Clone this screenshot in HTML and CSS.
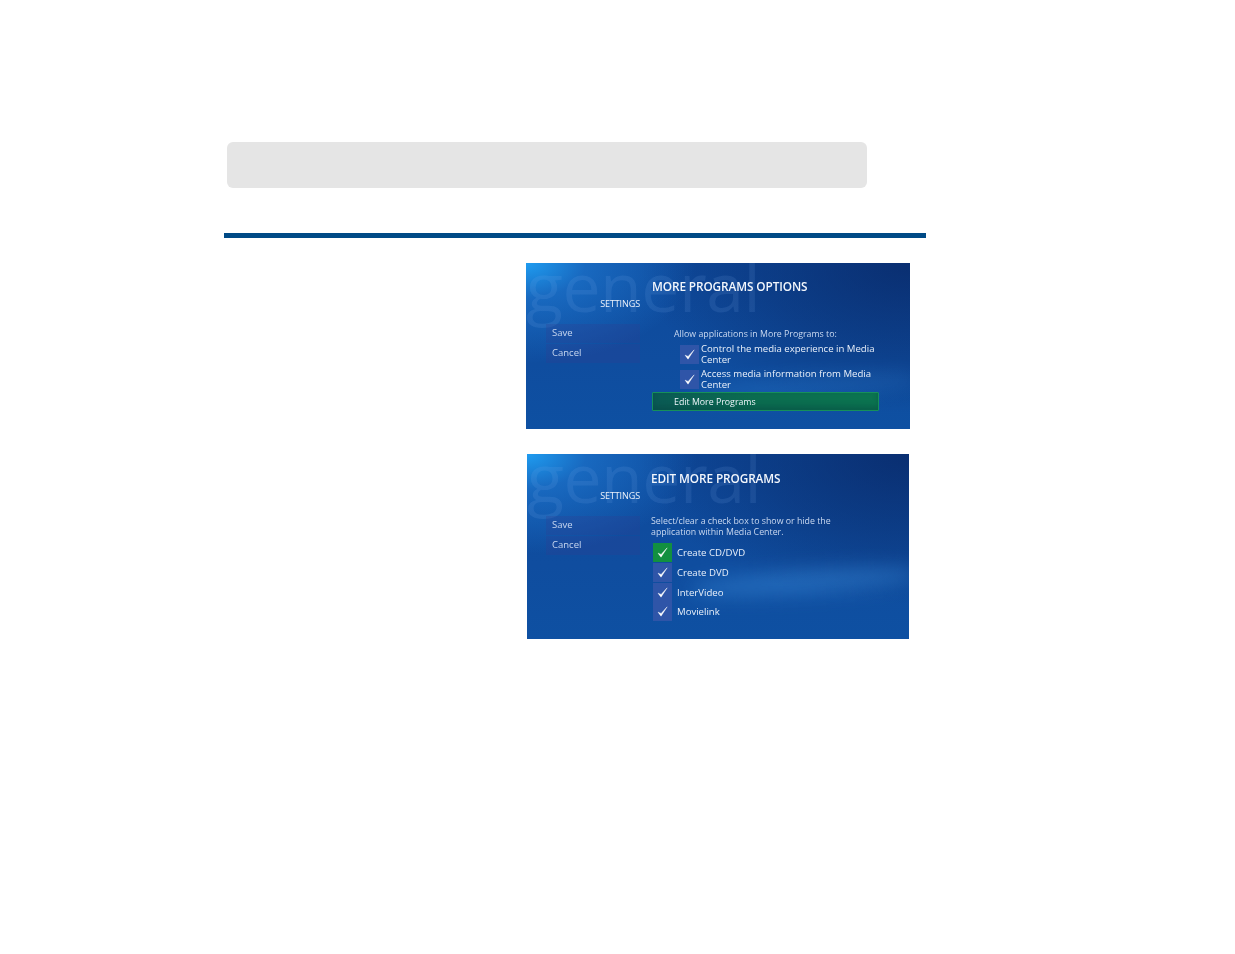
FILE: index.html
```html
<!DOCTYPE html>
<html lang="en">
<head>
<meta charset="utf-8">
<title>More Programs Options</title>
<link rel="stylesheet" href="styles.css">
</head>
<body>
<div class="page">
  <div class="notice"></div>
  <div class="rule"></div>
  <div class="shots">
    <section class="screen screen-a">
      <div class="watermark">general</div>
      <div class="streak"></div>
      <div class="side">
        <div class="settings">SETTINGS</div>
        <div class="menu-item">Save</div>
        <div class="menu-item">Cancel</div>
      </div>
      <div class="main">
        <div class="title">MORE PROGRAMS OPTIONS</div>
        <div class="allow">Allow applications in More Programs to:</div>
        <div class="opt">
          <span class="box"><svg viewBox="0 0 18 18"><path d="M4.8 9.6 7.6 13.4 13.4 4.6 7.7 10.8Z"/></svg></span>
          <span class="opt-text">Control the media experience in Media Center</span>
        </div>
        <div class="opt">
          <span class="box"><svg viewBox="0 0 18 18"><path d="M4.8 9.6 7.6 13.4 13.4 4.6 7.7 10.8Z"/></svg></span>
          <span class="opt-text">Access media information from Media Center</span>
        </div>
        <div class="edit">Edit More Programs</div>
      </div>
    </section>
    <section class="screen screen-b">
      <div class="watermark">general</div>
      <div class="streak"></div>
      <div class="side">
        <div class="settings">SETTINGS</div>
        <div class="menu-item">Save</div>
        <div class="menu-item">Cancel</div>
      </div>
      <div class="main">
        <div class="title">EDIT MORE PROGRAMS</div>
        <div class="desc">Select/clear a check box to show or hide the application within Media Center.</div>
        <div class="list">
          <div class="row"><span class="box box-on"><svg viewBox="0 0 18 18"><path d="M4.8 9.6 7.6 13.4 13.4 4.6 7.7 10.8Z"/></svg></span>Create CD/DVD</div>
          <div class="row"><span class="box"><svg viewBox="0 0 18 18"><path d="M4.8 9.6 7.6 13.4 13.4 4.6 7.7 10.8Z"/></svg></span>Create DVD</div>
          <div class="row"><span class="box"><svg viewBox="0 0 18 18"><path d="M4.8 9.6 7.6 13.4 13.4 4.6 7.7 10.8Z"/></svg></span>InterVideo</div>
          <div class="row"><span class="box"><svg viewBox="0 0 18 18"><path d="M4.8 9.6 7.6 13.4 13.4 4.6 7.7 10.8Z"/></svg></span>Movielink</div>
        </div>
      </div>
    </section>
  </div>
</div>
</body>
</html>
```
FILE: styles.css
```css
html, body { margin: 0; padding: 0; background: #fff; }
body { height: 954px; overflow: hidden; font-family: "Open Sans", "Noto Sans", sans-serif; }
.page { width: 702px; margin-left: 224px; padding-top: 142px; }
.notice { width: 640px; height: 46px; margin-left: 3px; background: #e5e5e5; border-radius: 6px; }
.rule { height: 5px; margin-top: 45px; background: #004a86; }
.shots { margin-left: 302px; margin-top: 25px; display: flex; flex-direction: column; gap: 25px; }

.screen {
  position: relative; overflow: hidden; display: flex; color: #e4ecf8;
  background:
    radial-gradient(ellipse 170px 100px at 0 0, #1f9cf0 0%, rgba(31,125,215,.6) 35%, rgba(20,90,180,0) 100%),
    radial-gradient(ellipse 270px 150px at 100% 0, rgba(8,35,95,.7) 0%, rgba(8,35,95,.35) 55%, rgba(8,35,95,0) 100%),
    linear-gradient(180deg, #0e4a9c 0%, #0f4d9f 60%, #0e50a2 100%);
}
.screen-a { width: 384px; height: 166px; }
.screen-b { width: 382px; height: 185px; margin-left: 1px; }
.watermark {
  position: absolute; left: 0; top: 0; font-size: 68px; line-height: 46px; letter-spacing: -.5px;
  color: rgba(130,180,240,.13); font-weight: 400; white-space: nowrap; filter: blur(.6px);
}
.streak {
  position: absolute; right: -10px; bottom: 45px; width: 230px; height: 24px; border-radius: 50%;
  background: rgba(70,160,235,.32); filter: blur(9px); transform: rotate(-4deg);
}
.screen-a .streak { opacity: .5; bottom: 30px; }
.side { position: relative; width: 94px; margin-left: 20px; flex: none; filter: blur(.25px); }
.screen-b .side { margin-left: 19px; }
.settings { font-size: 9px; line-height: 12px; text-align: right; letter-spacing: -.1px; color: #eef3fb; }
.screen-a .settings { padding-top: 35px; margin-bottom: 14px; }
.screen-b .settings { padding-top: 36px; margin-bottom: 14px; }
.menu-item {
  height: 19px; line-height: 18px; margin-bottom: 1px; padding-left: 6px; font-size: 9.5px;
  background: rgba(50,60,145,.25); color: #c9d8f0;
}
.main { position: relative; flex: 1; filter: blur(.25px); }
.title { font-size: 11.8px; line-height: 15px; font-weight: 600; color: #f2f6fc; white-space: nowrap; letter-spacing: -.1px; }
.screen-a .main { padding-left: 12px; padding-top: 16px; }
.screen-b .main { padding-left: 11px; padding-top: 17px; }
.allow { margin: 34px 0 2px 22px; font-size: 8.8px; line-height: 12px; color: #c9d8f0; }
.opt { display: flex; align-items: center; margin-left: 28px; height: 25px; }
.opt-text { width: 186px; margin-left: 2px; padding-bottom: 2px; font-size: 9.6px; line-height: 11px; color: #e9f0fa; }
.box { flex: none; display: flex; width: 19px; height: 19px; background: #2f55a8; }
.box svg { width: 100%; height: 100%; fill: #fff; stroke: #fff; stroke-width: .4; }
.box-on { background: #129040; }
.edit {
  box-sizing: border-box; width: 227px; height: 19px; padding-left: 21px; line-height: 18px; font-size: 8.8px;
  color: #eef4fa; border: 1px solid #16905a; border-radius: 1px;
  background: linear-gradient(90deg, #0a5a55 0%, #0b6c50 45%, #0b7450 100%);
  box-shadow: inset 0 -4px 5px rgba(5,60,60,.35);
}
.desc { width: 200px; margin-top: 30px; font-size: 8.8px; line-height: 11px; color: #c9d8f0; }
.list { margin: 5px 0 0 2px; }
.row { display: flex; align-items: center; height: 19.7px; font-size: 9.6px; color: #e9f0fa; }
.row .box { margin-right: 5px; height: 19px; }
```
